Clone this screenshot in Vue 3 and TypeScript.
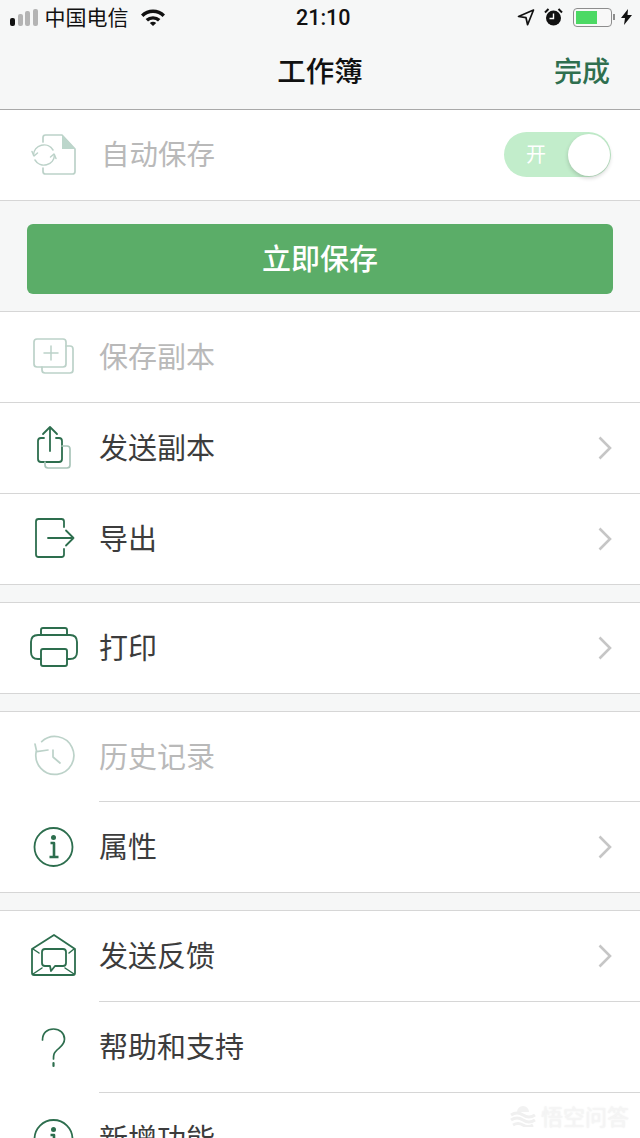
<template>
  <div class="page">
    <header class="top">
      <div class="status">
        <div class="status-left">
          <div class="signal">
            <i class="on" style="height: 8px"></i>
            <i style="height: 12px"></i>
            <i style="height: 15px"></i>
            <i style="height: 17px"></i>
          </div>
          <span class="carrier">中国电信</span>
          <svg class="wifi" width="26" height="18" viewBox="0 0 26 18">
            <path d="M1 6.500a17 17 0 0 1 24 0l-2.400 2.600a13.500 13.500 0 0 0-19.200 0z" fill="#111" />
            <path d="M5.600 11a11 11 0 0 1 14.800 0L18 13.500a7.500 7.500 0 0 0-10 0z" fill="#111" />
            <path d="M9.800 15a5 5 0 0 1 6.400 0L13 18z" fill="#111" />
          </svg>
        </div>
        <span class="time">21:10</span>
        <div class="status-right">
          <svg width="18" height="17" viewBox="0 0 18 17">
            <path d="M16.500 1 1.500 7.500l7.500 1.200 1.600 7z" fill="none" stroke="#111" stroke-width="1.700" stroke-linejoin="round" />
          </svg>
          <svg class="alarm" width="19" height="18" viewBox="0 0 19 18">
            <circle cx="9.500" cy="10" r="7.500" fill="#111" />
            <path d="M9.500 5.500V10.500H5.500" fill="none" stroke="#fff" stroke-width="1.400" />
            <path d="M1 4.500 4.500 1M18 4.500 14.500 1" stroke="#111" stroke-width="2" />
          </svg>
          <div class="battery"><div class="level"></div></div>
          <div class="nub"></div>
          <svg class="bolt" width="11" height="16" viewBox="0 0 11 16">
            <path d="M7 0 0 9h4l-1 7 8-10H6.500z" fill="#111" />
          </svg>
        </div>
      </div>
      <nav class="bar">
        <span class="title">工作簿</span>
        <span class="done">完成</span>
      </nav>
    </header>

    <section class="group">
      <div class="row off">
        <svg class="icon" width="60" height="60" viewBox="0 0 60 60" v-html="icons.sync"></svg>
        <span class="label auto-label">自动保存</span>
        <div class="switch">
          <span>开</span>
          <div class="knob"></div>
        </div>
      </div>
    </section>

    <div class="save-band">
      <button class="save-btn">立即保存</button>
    </div>

    <template v-for="(group, i) in groups" :key="i">
      <section class="group">
        <div
          v-for="item in group"
          :key="item.text"
          class="row"
          :class="{ off: item.disabled, line: item.line === 'full' }"
        >
          <svg class="icon" width="60" height="60" viewBox="0 0 60 60" v-html="icons[item.icon]"></svg>
          <div class="body" :class="{ inset: item.line === 'inset' }">
            <span class="label">{{ item.text }}</span>
            <svg v-if="item.arrow" class="chevron" width="16" height="26" viewBox="0 0 16 26">
              <path d="M2.500 2.500 13 13 2.500 23.500" fill="none" stroke="#c6c6c6" stroke-width="2.600" />
            </svg>
          </div>
        </div>
      </section>
      <div v-if="i < groups.length - 1" class="gap"></div>
    </template>

    <div class="mark">
      <svg width="26" height="24" viewBox="0 0 26 24">
        <path d="M7 9a6 6 0 0 1 12 0" fill="#f2f2f2" />
        <path d="M1 12q6-4 12 0t12 0M1 17q6-4 12 0t12 0M3 22q5-3 10 0t10 0" fill="none" stroke="#f0f0f0" stroke-width="3" />
      </svg>
      <span>悟空问答</span>
    </div>
  </div>
</template>

<script setup lang="ts">
interface Item {
  text: string
  icon: string
  disabled?: boolean
  arrow?: boolean
  line?: 'full' | 'inset'
}

const infoIcon = `
  <circle cx="29.500" cy="30" r="19" stroke-width="1.800" />
  <circle cx="29.500" cy="20.500" r="2.500" fill="currentColor" stroke="none" />
  <path d="M26.500 26H30V40M25.500 40H34.500" stroke-width="2.600" stroke-linecap="butt" />`

const icons: Record<string, string> = {
  sync: `
    <path d="M19 17V12.500Q19 10 21.500 10H38L51 24V46.500Q51 49 48.500 49H21.500Q19 49 19 46.500V43" stroke-width="1.700" />
    <path d="M38 10 51 24H38Z" fill="#bcd6cb" stroke="none" />
    <path d="M9.500 30A10.500 10.500 0 0 1 29 25M30.500 30A10.500 10.500 0 0 1 11 35" stroke-width="1.500" />
    <path d="M8 26.500 10 31 13.500 28M32 33.500 30 29 26.500 32" stroke-width="1.500" />`,
  copy: `
    <rect x="10" y="12" width="32" height="28" rx="3" stroke-width="1.700" />
    <path d="M27 19V33M20 26H34" stroke-width="1.500" />
    <path d="M42 19H46Q49 19 49 22V43Q49 46 46 46H21Q18 46 18 43V40" stroke-width="1.700" />`,
  send: `
    <path d="M20 20H17Q14 20 14 23V41Q14 44 17 44H35Q38 44 38 41V23Q38 20 35 20H32" stroke-width="1.800" />
    <path d="M26 33V9M19 16 26 9 33 16" stroke-width="1.800" />
    <path d="M38 28H43Q46 28 46 31V47Q46 50 43 50H24Q21 50 21 47V44" stroke="#a9c5b9" stroke-width="1.700" />`,
  export: `
    <path d="M40 18V12.500Q40 10 37.500 10H14.500Q12 10 12 12.500V45.500Q12 48 14.500 48H37.500Q40 48 40 45.500V40" stroke-width="1.800" />
    <path d="M24 29H49.500M42 21.500 49.500 29 42 36.500" stroke-width="1.800" />`,
  print: `
    <path d="M17 41H14Q7 41 7 34V24Q7 17 14 17H46Q53 17 53 24V34Q53 41 46 41H43" stroke-width="1.900" />
    <path d="M17 17V12Q17 10 19 10H41Q43 10 43 12V17" stroke-width="1.900" />
    <rect x="17" y="31" width="26" height="17" rx="2" stroke-width="1.900" />`,
  history: `
    <path d="M17.700 14.700A19 19 0 1 1 12.200 24.700" stroke-width="1.700" />
    <path d="M11 17 12.700 24.700 24 23" stroke-width="1.700" />
    <path d="M29 23V30L36 36" stroke-width="1.700" />`,
  info: infoIcon,
  mail: `
    <path d="M8 22 30 8 51 22V46Q51 48 49 48H10Q8 48 8 46Z" stroke-width="1.800" />
    <path d="M21 22H39Q42 22 42 25V36Q42 39 39 39H31L27 44 26 39H21Q18 39 18 36V25Q18 22 21 22Z" stroke-width="1.800" />
    <path d="M9 47 18 41M50 47 41 41M9 22 15 26M50 22 45 26" stroke-width="1.500" />`,
  help: `
    <path d="M18.500 22C18.500 15 23 11 29.500 11S40.500 15.500 40.500 21C40.500 27 36 29 33 32S29.500 36 29.500 41" stroke-width="1.700" />
    <path d="M29.500 45V48" stroke-width="2.200" />`
}

const groups: Item[][] = [
  [
    { text: '保存副本', icon: 'copy', disabled: true, line: 'full' },
    { text: '发送副本', icon: 'send', arrow: true, line: 'full' },
    { text: '导出', icon: 'export', arrow: true }
  ],
  [{ text: '打印', icon: 'print', arrow: true }],
  [
    { text: '历史记录', icon: 'history', disabled: true, line: 'inset' },
    { text: '属性', icon: 'info', arrow: true }
  ],
  [
    { text: '发送反馈', icon: 'mail', arrow: true, line: 'inset' },
    { text: '帮助和支持', icon: 'help', line: 'inset' },
    { text: '新增功能', icon: 'info' }
  ]
]
</script>

<style>
html,
body {
  height: 1138px;
  overflow: hidden;
}
</style>

<style scoped>
.page {
  position: relative;
  width: 640px;
  height: 1138px;
  overflow: hidden;
  background: #f6f7f7;
  font-family: "Noto Sans CJK SC", "Liberation Sans", sans-serif;
}

.top {
  height: 109px;
  border-bottom: 1px solid #a9a9a9;
  background: #f6f7f7;
}

.status {
  position: relative;
  display: flex;
  justify-content: space-between;
  align-items: center;
  height: 34px;
  color: #111;
}

.status-left {
  display: flex;
  align-items: center;
  padding-left: 10px;
}

.signal {
  display: flex;
  align-items: flex-end;
  gap: 2.500px;
  height: 17px;
}

.signal i {
  width: 5px;
  border-radius: 2px;
  background: #b4b4b4;
}

.signal i.on {
  background: #111;
}

.carrier {
  margin-left: 7px;
  padding-bottom: 2px;
  font-size: 21px;
  line-height: 32px;
}

.wifi {
  margin-left: 11px;
}

.time {
  position: absolute;
  left: 296px;
  font-family: Roboto, "Liberation Sans", sans-serif;
  font-size: 21.500px;
  font-weight: 500;
}

.status-right {
  display: flex;
  align-items: center;
  padding-right: 8px;
}

.alarm {
  margin-left: 9px;
}

.battery {
  width: 39px;
  height: 19px;
  margin-left: 10px;
  padding: 2px;
  box-sizing: border-box;
  border: 1.500px solid #8d8d8d;
  border-radius: 4px;
  background: #f8f8f8;
}

.level {
  width: 21px;
  height: 100%;
  background: #4cd964;
}

.nub {
  width: 2px;
  height: 6px;
  margin-left: 1px;
  background: #8d8d8d;
}

.bolt {
  margin-left: 6px;
}

.bar {
  position: relative;
  display: flex;
  justify-content: center;
  align-items: center;
  height: 75px;
}

.title {
  padding-bottom: 4px;
  font-size: 28.500px;
  font-weight: 500;
  color: #111;
}

.done {
  position: absolute;
  right: 30px;
  padding-bottom: 4px;
  font-size: 28px;
  font-weight: 500;
  color: #2f6f4f;
}

.group {
  border-bottom: 1px solid #d6d6d6;
  background: #fff;
}

.row {
  display: flex;
  align-items: center;
  height: 90px;
  color: #2d6e4e;
}

.group:last-of-type .row {
  height: 91px;
}

.row.line {
  border-bottom: 1px solid #d6d6d6;
}

.row.off {
  color: #bcd2c9;
}

.icon {
  flex: none;
  margin-left: 24px;
  fill: none;
  stroke: currentColor;
  stroke-linecap: round;
  stroke-linejoin: round;
}

.body {
  flex: 1;
  display: flex;
  justify-content: space-between;
  align-items: center;
  box-sizing: border-box;
  height: 100%;
  margin-left: 15px;
  padding-right: 27px;
}

.body.inset {
  border-bottom: 1px solid #d6d6d6;
}

.label {
  margin-bottom: 4px;
  font-size: 29px;
  color: #3c3c3c;
}

.off .label {
  color: #b9b9b9;
}

.auto-label {
  margin-bottom: 6px;
  margin-left: 17px;
  font-size: 28.500px;
}

.switch {
  display: flex;
  align-items: center;
  box-sizing: border-box;
  width: 107px;
  height: 45px;
  margin-bottom: 1px;
  margin-left: auto;
  margin-right: 29px;
  padding-left: 22px;
  border-radius: 23px;
  background: #c2edcb;
  color: #fff;
  font-size: 20px;
}

.switch span {
  padding-bottom: 3px;
}

.knob {
  width: 42px;
  height: 42px;
  margin-left: auto;
  margin-right: 1.500px;
  border-radius: 50%;
  background: #fff;
  box-shadow: 0 2px 4px rgba(0, 0, 0, 0.18);
}

.save-band {
  box-sizing: border-box;
  height: 111px;
  padding: 23px 27px 0;
  border-bottom: 1px solid #d6d6d6;
}

.save-btn {
  display: block;
  width: 100%;
  height: 70px;
  padding: 0 0 4px;
  border: 0;
  border-radius: 6px;
  background: #5bad68;
  color: #fff;
  font-family: inherit;
  font-size: 29px;
  font-weight: 500;
}

.gap {
  height: 17px;
  border-bottom: 1px solid #d6d6d6;
}

.mark {
  position: absolute;
  left: 510px;
  top: 1102px;
  display: flex;
  align-items: center;
  gap: 5px;
  font-size: 22px;
  line-height: 26px;
  color: #f5f5f5;
  text-shadow: 0 0 2px #ececec;
}
</style>
